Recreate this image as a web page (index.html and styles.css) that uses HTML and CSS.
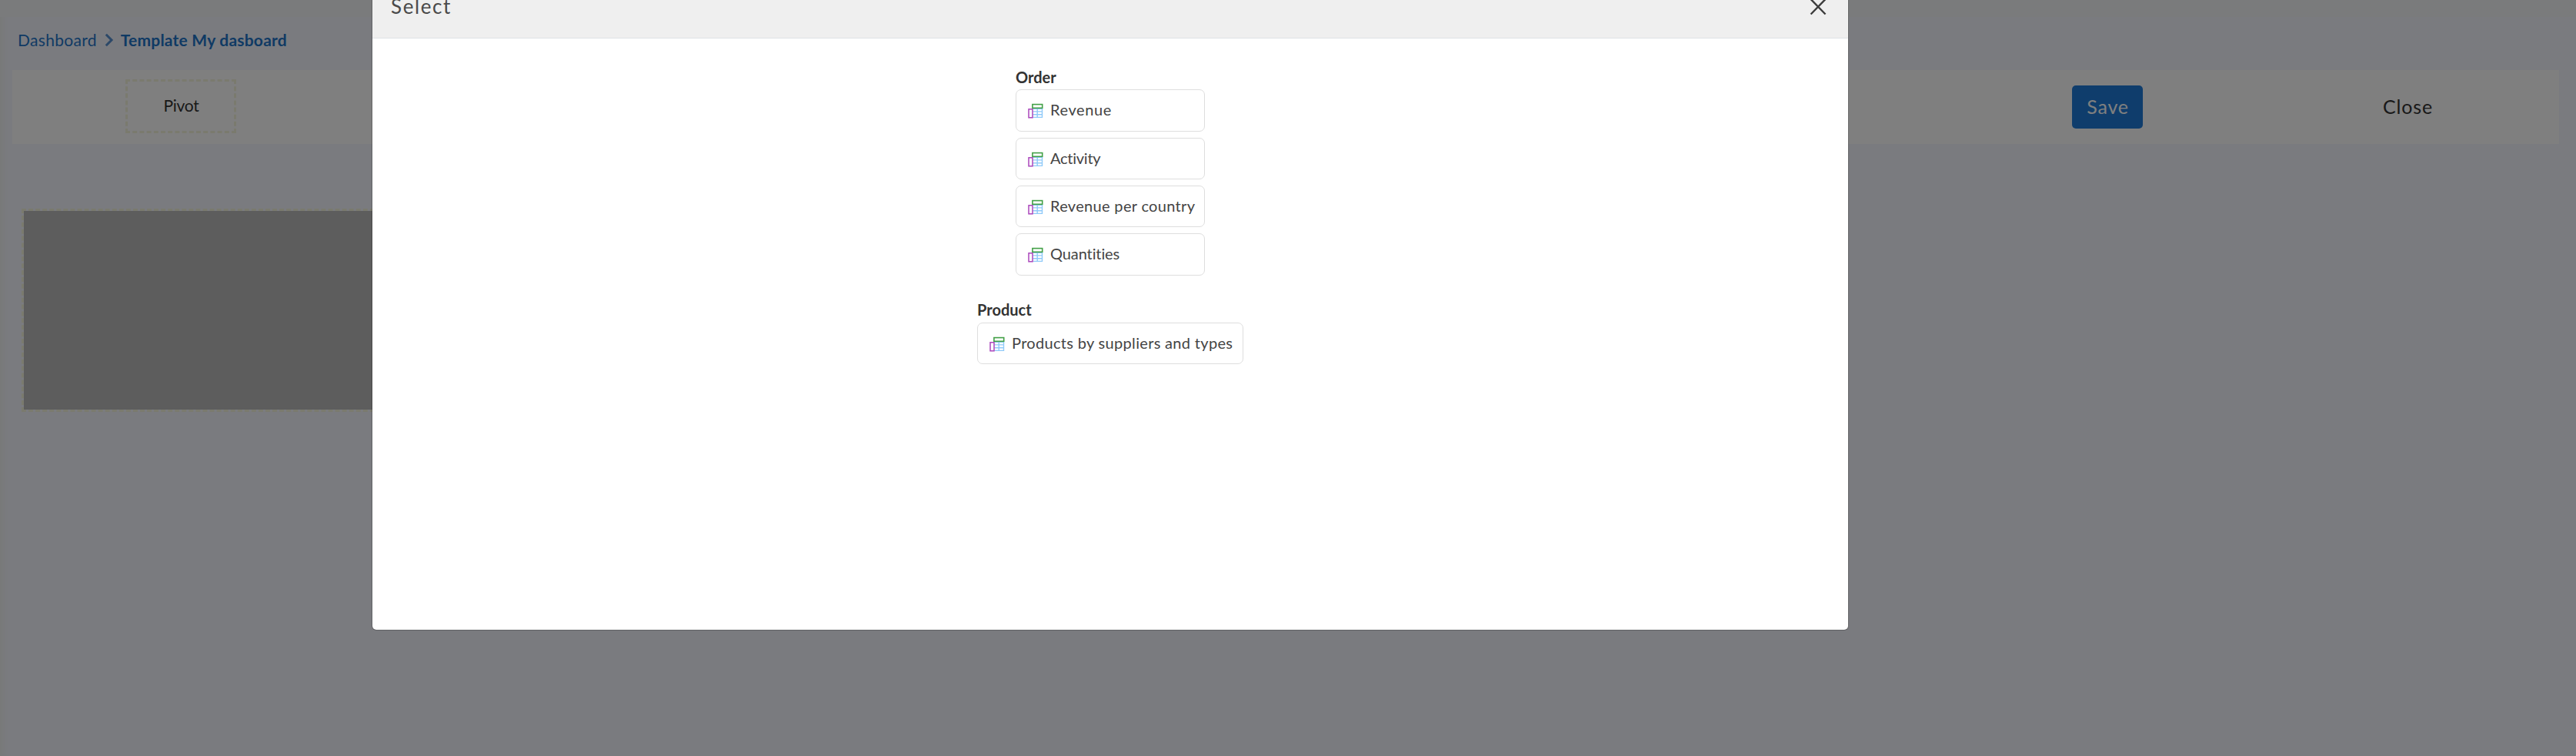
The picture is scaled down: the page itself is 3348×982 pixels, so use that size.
FILE: index.html
```html
<!DOCTYPE html>
<html lang="en">
<head>
<meta charset="utf-8">
<title>Template My dasboard</title>
<link rel="stylesheet" href="styles.css">
</head>
<body>
<svg class="defs" width="0" height="0">
  <symbol id="pivot" viewBox="0 0 20 20">
    <path d="M6.5 7.2H18.5V18.4H6.5M6.5 10.9H18.5M6.5 14.7H18.5M12.2 7V18.4" fill="none" stroke="#90caf9" stroke-width="1.4"/>
    <rect x="1" y="7.8" width="5" height="11" fill="#fff" stroke="#ab47bc" stroke-width="1.5"/>
    <rect x="5.9" y="1.6" width="12.8" height="4.7" fill="#fff" stroke="#43a047" stroke-width="1.6"/>
  </symbol>
</svg>
<div class="page">
  <nav class="crumbs">
    <a class="crumb">Dashboard</a>
    <svg class="chevron" viewBox="0 0 12 18"><path d="M1.8 1.8L9 9L1.8 16.2" fill="none" stroke="#5890d0" stroke-width="3"/></svg>
    <a class="crumb current">Template My dasboard</a>
  </nav>
  <div class="toolbar">
    <div class="widget">Pivot</div>
    <div class="actions">
      <button class="btn save">Save</button>
      <button class="btn close">Close</button>
    </div>
  </div>
  <div class="board"></div>
</div>
<div class="overlay">
  <section class="dialog">
    <header class="head">
      <h1 class="title">Select</h1>
      <svg class="dismiss" viewBox="0 0 22 22"><path d="M1.5 1L20.5 20.5M20.5 1L1.5 20.5" fill="none" stroke="#3c3c3c" stroke-width="2.4"/></svg>
    </header>
    <div class="body">
      <div class="group">
        <h2 class="name">Order</h2>
        <div class="item"><svg class="icon"><use href="#pivot"/></svg><span class="label wide">Revenue</span></div>
        <div class="item"><svg class="icon"><use href="#pivot"/></svg><span class="label tight">Activity</span></div>
        <div class="item"><svg class="icon"><use href="#pivot"/></svg><span class="label">Revenue per country</span></div>
        <div class="item"><svg class="icon"><use href="#pivot"/></svg><span class="label snug">Quantities</span></div>
      </div>
      <div class="group product">
        <h2 class="name">Product</h2>
        <div class="item"><svg class="icon"><use href="#pivot"/></svg><span class="label">Products by suppliers and types</span></div>
      </div>
    </div>
  </section>
</div>
</body>
</html>
```
FILE: styles.css
```css
* { box-sizing: border-box; }
body { margin: 0; height: 982px; overflow: hidden; font-family: Lato, sans-serif; color: #333; }
.defs { position: absolute; }
.page { height: 982px; padding: 0 22px 0 16px; background: #f5f7ff; box-shadow: inset 0 24px 0 -2px #f5f7f8, inset 9px 0 12px -6px #eef2ee; }
.crumbs { height: 91px; padding: 39px 0 0 7px; display: flex; align-items: flex-start; }
.crumb { font-size: 21px; line-height: 26px; letter-spacing: .3px; color: #1e74c9; }
.chevron { width: 12px; height: 18px; margin: 4px 9px 0 10px; }
.current { font-weight: 700; letter-spacing: .22px; }
.toolbar { height: 96px; padding: 12px 0 0 147px; display: flex; align-items: flex-start; justify-content: space-between; background: #fff; }
.widget { width: 144px; height: 70px; padding: 18px 0 0 1px; border: 3px dashed #f5f5dc; font-size: 21px; line-height: 26px; letter-spacing: -.3px; text-align: center; color: #333; }
.actions { display: flex; padding: 8px 151px 0 0; }
.btn { height: 56px; padding: 0 0 2px 1px; border: 0; border-radius: 5px; font: 400 25px/30px Lato, sans-serif; letter-spacing: .8px; color: #333; background: none; }
.save { width: 92px; background: #1e7ad8; color: #fff; }
.close { width: 92px; margin-left: 298px; }
.board { width: 640px; height: 264px; margin: 84px 0 0 12px; border: 3px dashed #f5f5dc; background: #bababa; background-clip: padding-box; }
.overlay { position: absolute; inset: 0; background: rgba(0, 0, 0, .5); }
.dialog { width: 1920px; height: 819px; margin-left: 483px; background: #fff; background-clip: padding-box; border: 1px solid rgba(0, 0, 0, .2); border-top: 0; border-radius: 0 0 6px 6px; overflow: hidden; }
.head { height: 50px; padding: 0 28px 0 24px; display: flex; justify-content: space-between; align-items: flex-start; background: #efefef; border-bottom: 1px solid #dee2e6; }
.title { margin: 0; font-size: 26px; line-height: 17px; font-weight: 400; letter-spacing: 1.6px; color: #4a4a4a; }
.dismiss { width: 22px; height: 22px; margin-top: -2px; }
.body { display: flex; flex-direction: column; align-items: center; padding-top: 38px; }
.group { width: 246px; }
.product { width: 346px; margin-top: 25px; }
.name { margin: 0 0 4.3px; font-size: 20px; line-height: 24px; font-weight: 700; }
.item { height: 54.6px; margin-bottom: 7.7px; padding: 0 0 0 15px; display: flex; align-items: flex-start; border: 1px solid #dedede; border-radius: 7px; }
.icon { width: 20px; height: 20px; margin: 17px 9px 0 0; flex: none; }
.label { font-size: 20px; line-height: 24px; margin-top: 13px; letter-spacing: .32px; white-space: nowrap; color: #444; }
.wide { letter-spacing: .6px; }
.tight { letter-spacing: -.25px; }
.snug { letter-spacing: -.1px; }
```
